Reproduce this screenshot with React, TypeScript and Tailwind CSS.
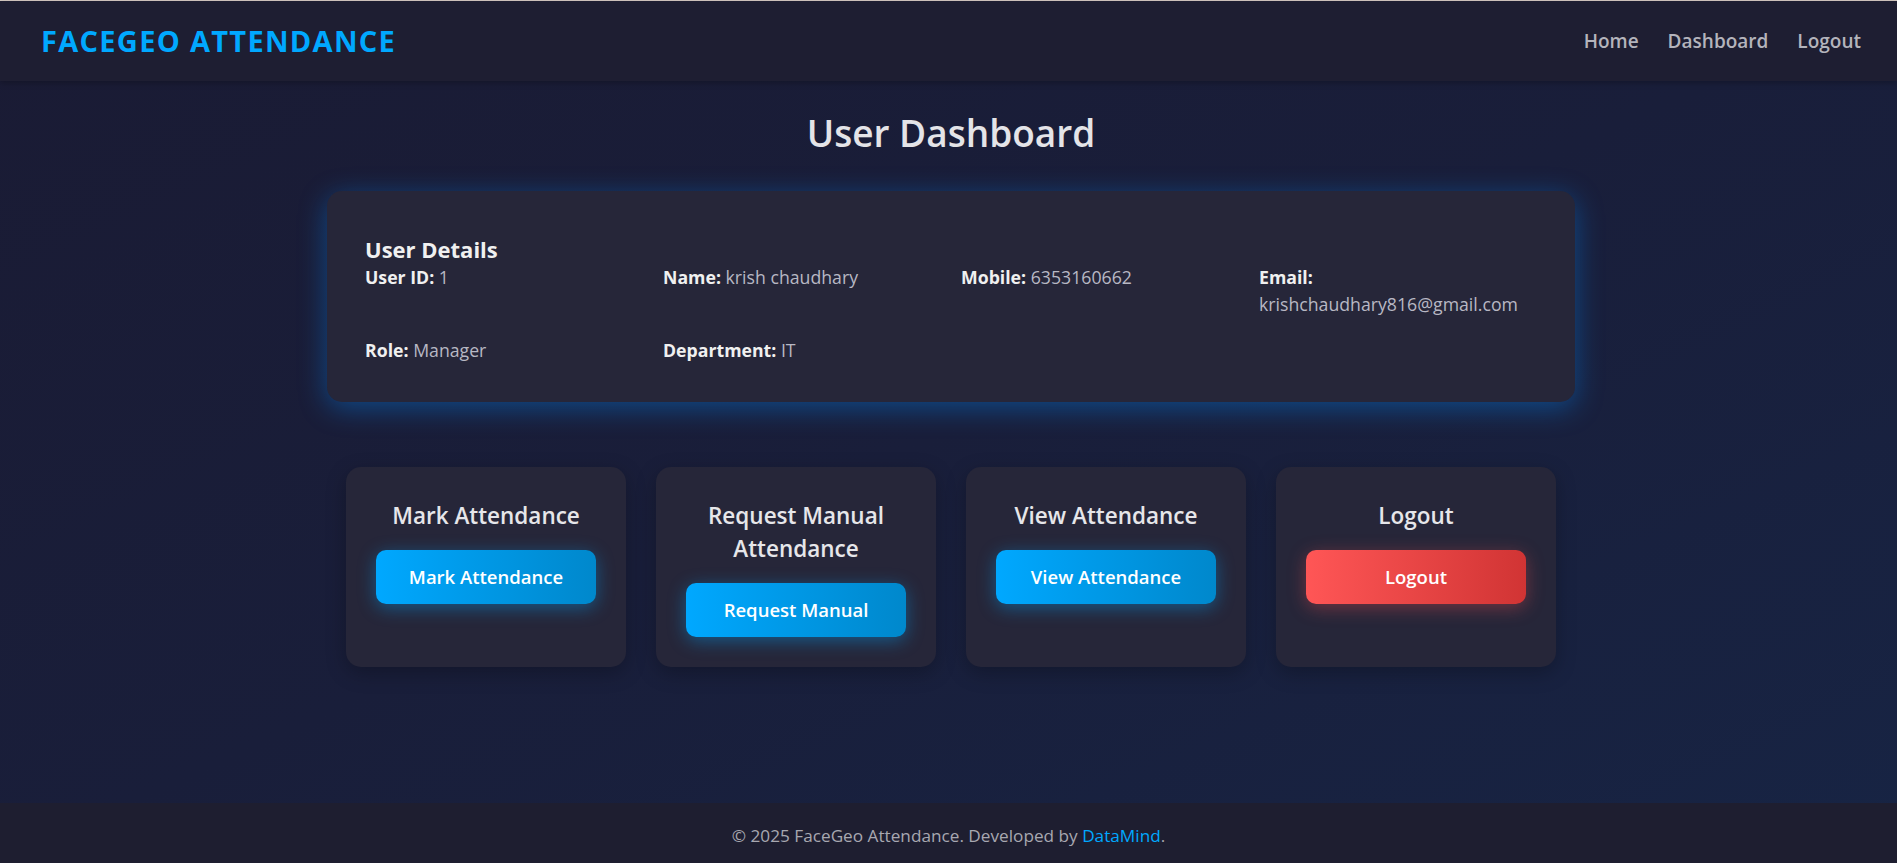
import React from "react";

const font = { fontFamily: '"Segoe UI", "Open Sans", "Noto Sans", sans-serif' };

function Detail({ label, value }: { label: string; value: string }) {
  return (
    <div className="text-[17.7px] leading-[27px] text-[#b8b8c4]">
      <span className="font-bold text-[#f0f0f0]">{label}</span> {value}
    </div>
  );
}

function ActionCard({
  title,
  button,
  red,
}: {
  title: React.ReactNode;
  button: string;
  red?: boolean;
}) {
  return (
    <div className="w-[280px] rounded-[15px] bg-[#262639] px-[30px] pt-[32px] pb-[30px] shadow-[0_6px_20px_rgba(0,0,0,0.25)] flex flex-col">
      <h3 className="text-center text-[22.5px] leading-[33px] font-semibold text-[#e6e6ea]">{title}</h3>
      <button
        className={
          red
            ? "mt-[18px] h-[54px] w-full rounded-[10px] bg-gradient-to-r from-[#ff5656] to-[#d13434] text-[18.5px] font-semibold text-white shadow-[0_4px_18px_rgba(255,80,80,0.35)]"
            : "mt-[18px] h-[54px] w-full rounded-[10px] bg-gradient-to-r from-[#00a8ff] to-[#0088cc] text-[18.5px] font-semibold text-white shadow-[0_4px_18px_rgba(0,168,255,0.4)]"
        }
      >
        {button}
      </button>
    </div>
  );
}

export default function App() {
  return (
    <div
      style={font}
      className="min-h-screen flex flex-col bg-gradient-to-br from-[#1a1b34] via-[#191e3a] to-[#172444] border-t border-[#d8ccc4]"
    >
      <nav className="h-[80px] shrink-0 flex items-center justify-between bg-[#1e1e32] pl-[41px] pr-[36px] shadow-[0_2px_6px_rgba(0,0,0,0.25)]">
        <div className="text-[29px] font-bold tracking-[1.3px] text-[#00a8ff]">FACEGEO ATTENDANCE</div>
        <div className="flex items-center gap-[29px] text-[19px] font-semibold text-[#b4b4bc]">
          <span>Home</span>
          <span>Dashboard</span>
          <span>Logout</span>
        </div>
      </nav>

      <main className="flex-1 flex flex-col items-center pl-[5px]">
        <h1 className="mt-[28px] text-[37px] leading-[48px] font-semibold text-[#e4e4e8]">User Dashboard</h1>

        <section className="mt-[34px] w-[1248px] rounded-[15px] bg-[#262639] px-[38px] pt-[43px] pb-[38px] shadow-[0_6px_28px_rgba(0,140,255,0.4)]">
          <h3 className="text-[22px] leading-[30px] font-bold text-[#f0f0f0]">User Details</h3>
          <div className="grid grid-cols-4 gap-x-[20px] gap-y-[19px]">
            <Detail label="User ID:" value="1" />
            <Detail label="Name:" value="krish chaudhary" />
            <Detail label="Mobile:" value="6353160662" />
            <Detail label="Email:" value="krishchaudhary816@gmail.com" />
            <Detail label="Role:" value="Manager" />
            <Detail label="Department:" value="IT" />
          </div>
        </section>

        <div className="mt-[65px] flex justify-center gap-[30px]">
          <ActionCard title="Mark Attendance" button="Mark Attendance" />
          <ActionCard title="Request Manual Attendance" button="Request Manual" />
          <ActionCard title="View Attendance" button="View Attendance" />
          <ActionCard title="Logout" button="Logout" red />
        </div>
      </main>

      <footer className="h-[60px] shrink-0 flex items-center justify-center bg-[#1e1e30] text-[17.2px] text-[#a8a8b0]">
        <p className="mt-[6px]">
          © 2025 FaceGeo Attendance. Developed by <span className="text-[#00a8ff]">DataMind</span>.
        </p>
      </footer>
    </div>
  );
}
